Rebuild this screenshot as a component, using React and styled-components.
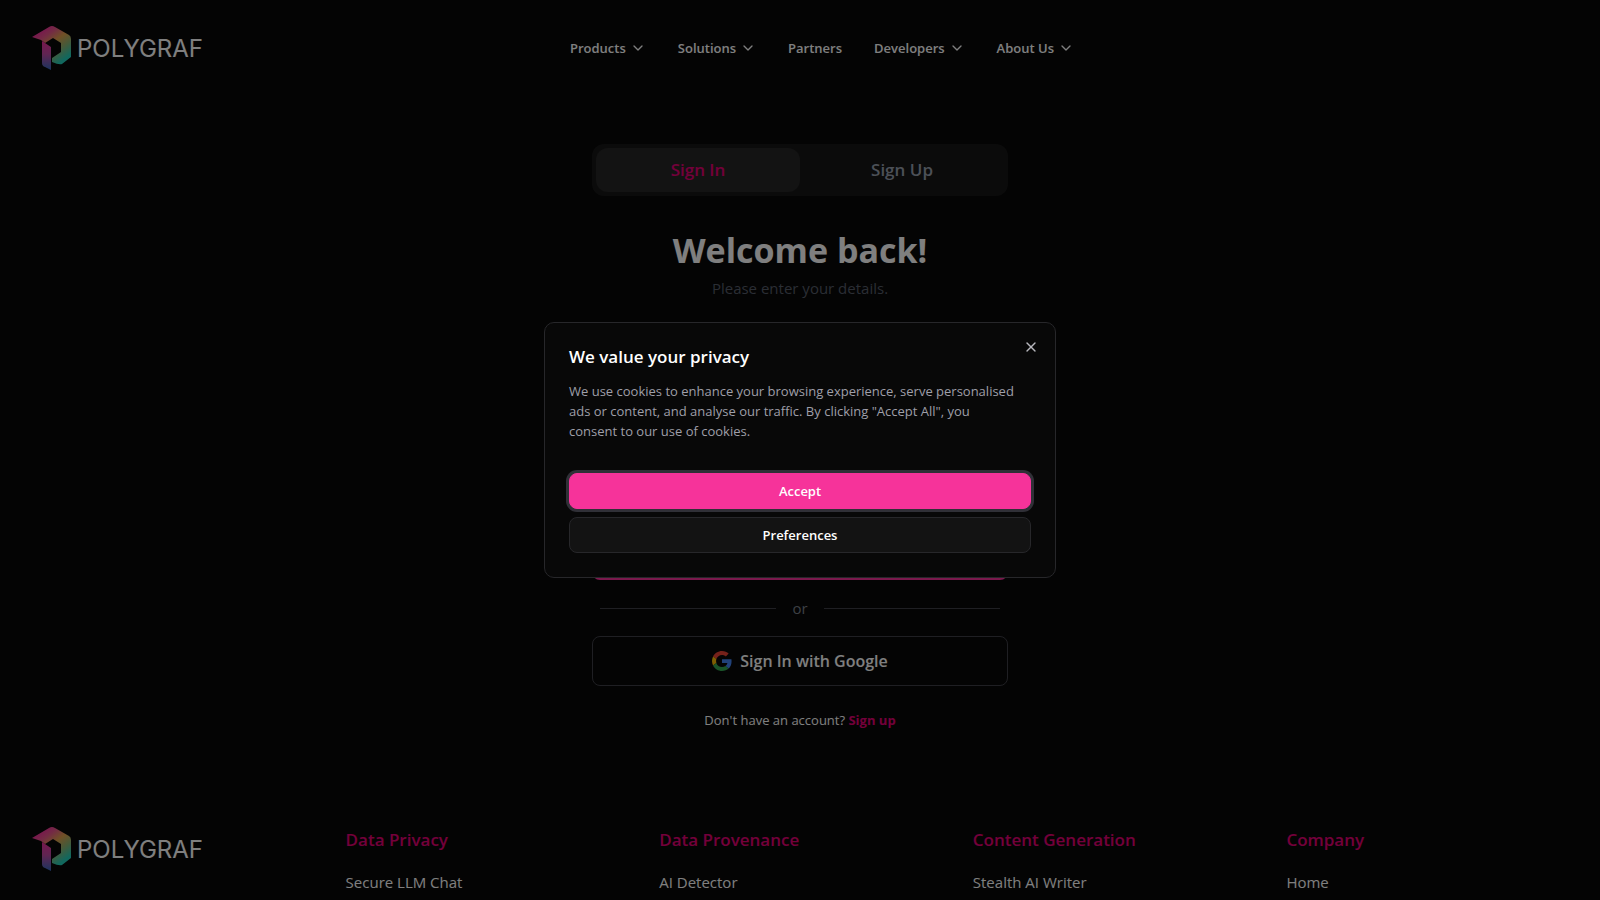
import React from "react";
import styled, { createGlobalStyle, css } from "styled-components";
import { ChevronDown, X } from "lucide-react";

const GlobalStyle = createGlobalStyle`
  *, *::before, *::after { box-sizing: border-box; }
  html, body { margin: 0; background: #080808; }
  body {
    color: #ffffff;
    font-family: "Segoe UI", "Open Sans", "Noto Sans", sans-serif;
    font-size: 15px;
    line-height: 24px;
    overflow: hidden;
  }
  h1, h2, p, ul { margin: 0; padding: 0; }
  ul { list-style: none; }
  a { color: inherit; text-decoration: none; }
  button, input { font: inherit; color: inherit; }
`;

const Page = styled.div`
  display: flex;
  flex-direction: column;
`;

const Header = styled.header`
  display: grid;
  grid-template-columns: 1fr auto 1fr;
  align-items: center;
  height: 96px;
  padding: 0 32px;
`;

const Nav = styled.nav`
  display: flex;
  gap: 32px;
  padding-left: 44px;
`;

const navItem = css`
  display: flex;
  align-items: center;
  gap: 4px;
  padding: 0;
  border: 0;
  background: none;
  font-size: 13px;
  font-weight: 600;
  line-height: 20px;
`;

const NavButton = styled.button`
  ${navItem}
`;

const NavLink = styled.a`
  ${navItem}
`;

const LogoLink = styled.a`
  display: block;
  width: 176px;
  height: 46px;
  svg { display: block; }
`;

const Main = styled.main`
  display: flex;
  flex-direction: column;
  width: 100%;
  max-width: 416px;
  margin: 48px auto 0;
`;

const Tabs = styled.div`
  display: grid;
  grid-template-columns: 1fr 1fr;
  padding: 4px;
  border-radius: 12px;
  background: #171717;
`;

const Tab = styled.button`
  height: 44px;
  border: 0;
  border-radius: 12px;
  background: ${(p) => (p.$active ? "#262626" : "transparent")};
  color: ${(p) => (p.$active ? "#e60076" : "#99a1af")};
  font-size: 17px;
  font-weight: 600;
`;

const Heading = styled.h1`
  margin-top: 32px;
  font-size: 34px;
  font-weight: 700;
  line-height: 44px;
  text-align: center;
`;

const Subheading = styled.p`
  margin-top: 4px;
  color: #565c68;
  text-align: center;
`;

const Form = styled.form`
  display: flex;
  flex-direction: column;
  gap: 32px;
  margin-top: 32px;
`;

const Field = styled.input`
  height: 68px;
  padding: 0 16px;
  border: 1px solid #3f3f46;
  border-radius: 8px;
  background: transparent;
`;

const Submit = styled.button`
  height: 48px;
  border: 0;
  border-radius: 8px;
  background: #f6339a;
`;

const Divider = styled.div`
  display: flex;
  align-items: center;
  gap: 16px;
  margin: 16px 8px;
  color: #7a808a;
  &::before, &::after {
    content: "";
    flex: 1;
    height: 1px;
    background: #3f3f46;
  }
`;

const GoogleButton = styled.button`
  display: flex;
  align-items: center;
  justify-content: center;
  gap: 8px;
  height: 50px;
  border: 1px solid #3f3f46;
  border-radius: 8px;
  background: transparent;
  font-size: 16px;
  font-weight: 600;
`;

const AccountLine = styled.p`
  margin-top: 24px;
  font-size: 13px;
  line-height: 20px;
  text-align: center;
  a { color: #e60076; font-weight: 700; }
`;

const Footer = styled.footer`
  display: grid;
  grid-template-columns: repeat(5, 1fr);
  gap: 32px;
  margin-top: 96px;
  padding: 0 32px 4px;
`;

const FooterTitle = styled.h2`
  color: #e60076;
  font-size: 17px;
  font-weight: 600;
  line-height: 28px;
`;

const FooterList = styled.ul`
  margin-top: 16px;
`;

const Overlay = styled.div`
  position: fixed;
  inset: 0;
  display: flex;
  align-items: center;
  justify-content: center;
  background: rgba(0, 0, 0, 0.5);
`;

const Dialog = styled.section`
  position: relative;
  display: flex;
  flex-direction: column;
  width: 100%;
  max-width: 512px;
  padding: 24px;
  border: 1px solid #27272a;
  border-radius: 10px;
  background: #080808;
`;

const DialogTitle = styled.h2`
  font-size: 17px;
  font-weight: 600;
  line-height: 20px;
`;

const DialogText = styled.p`
  margin-top: 14px;
  padding-right: 12px;
  color: #9f9fa9;
  font-size: 13px;
  line-height: 20px;
`;

const DialogActions = styled.div`
  display: flex;
  flex-direction: column;
  gap: 8px;
  margin-top: 32px;
`;

const DialogButton = styled.button`
  height: 36px;
  border: 1px solid ${(p) => (p.$primary ? "#f6339a" : "#27272a")};
  border-radius: 8px;
  background: ${(p) => (p.$primary ? "#f6339a" : "#131313")};
  box-shadow: ${(p) => (p.$primary ? "0 0 0 3px #303037" : "none")};
  font-size: 13px;
  font-weight: 600;
  outline: none;
`;

const CloseButton = styled.button`
  position: absolute;
  top: 16px;
  right: 16px;
  padding: 0;
  border: 0;
  background: none;
  color: #b8b8be;
  svg { display: block; }
`;

function Logo({ id }) {
  return (
    <LogoLink href="#" aria-label="Polygraf">
      <svg width="176" height="46" viewBox="0 0 176 46">
        <defs>
          <linearGradient id={`${id}-ring`} x1="8" y1="6" x2="30" y2="36" gradientUnits="userSpaceOnUse">
            <stop offset="0" stopColor="#f0309c" />
            <stop offset="0.2" stopColor="#e8568a" />
            <stop offset="0.45" stopColor="#e0a04c" />
            <stop offset="0.7" stopColor="#8fb472" />
            <stop offset="1" stopColor="#24d0bc" />
          </linearGradient>
          <linearGradient id={`${id}-stem`} x1="0" y1="16" x2="0" y2="45" gradientUnits="userSpaceOnUse">
            <stop offset="0" stopColor="#f0309c" />
            <stop offset="0.45" stopColor="#c04aa4" />
            <stop offset="1" stopColor="#3668bc" />
          </linearGradient>
        </defs>
        <path
          d="M0 12 L17 2 Q20 0 23 2 L37 10 Q39 11 39 14 V32 L30 39 Q27 40 20 37 V33 L29 27 V18 L21 13 L13 18 L9 15 Z"
          fill={`url(#${id}-ring)`}
        />
        <path d="M10 16 L19 22 V45 L13 42 Q10 41 10 38 Z" fill={`url(#${id}-stem)`} />
        <text x="45" y="32" fill="#ffffff" fontFamily="Inter, sans-serif" fontSize="24" fontWeight="400">
          POLYGRAF
        </text>
      </svg>
    </LogoLink>
  );
}

function GoogleIcon() {
  return (
    <svg width="20" height="20" viewBox="0 0 48 48" aria-hidden="true">
      <path fill="#EA4335" d="M24 9.5c3.54 0 6.71 1.22 9.21 3.6l6.85-6.85C35.9 2.38 30.47 0 24 0 14.62 0 6.51 5.38 2.56 13.22l7.98 6.19C12.43 13.72 17.74 9.5 24 9.5z" />
      <path fill="#4285F4" d="M46.98 24.55c0-1.57-.15-3.09-.38-4.55H24v9.02h12.94c-.58 2.96-2.26 5.48-4.78 7.18l7.73 6c4.51-4.18 7.09-10.36 7.09-17.65z" />
      <path fill="#FBBC05" d="M10.53 28.59c-.48-1.45-.76-2.99-.76-4.59s.27-3.14.76-4.59l-7.98-6.19C.92 16.46 0 20.12 0 24c0 3.88.92 7.54 2.56 10.78l7.97-6.19z" />
      <path fill="#34A853" d="M24 48c6.48 0 11.93-2.13 15.89-5.81l-7.73-6c-2.15 1.45-4.92 2.3-8.16 2.3-6.26 0-11.57-4.22-13.47-9.91l-7.98 6.19C6.51 42.62 14.62 48 24 48z" />
    </svg>
  );
}

const menu = [
  { label: "Products", opens: true },
  { label: "Solutions", opens: true },
  { label: "Partners", opens: false },
  { label: "Developers", opens: true },
  { label: "About Us", opens: true },
];

const footerColumns = [
  { title: "Data Privacy", links: ["Secure LLM Chat"] },
  { title: "Data Provenance", links: ["AI Detector"] },
  { title: "Content Generation", links: ["Stealth AI Writer"] },
  { title: "Company", links: ["Home"] },
];

export default function App() {
  return (
    <>
      <GlobalStyle />
      <Page>
        <Header>
          <Logo id="header-logo" />
          <Nav aria-label="Main">
            {menu.map((item) =>
              item.opens ? (
                <NavButton key={item.label} type="button">
                  {item.label}
                  <ChevronDown size={16} />
                </NavButton>
              ) : (
                <NavLink key={item.label} href="#">
                  {item.label}
                </NavLink>
              )
            )}
          </Nav>
        </Header>
        <Main>
          <Tabs role="tablist">
            <Tab type="button" role="tab" aria-selected="true" $active>Sign In</Tab>
            <Tab type="button" role="tab" aria-selected="false">Sign Up</Tab>
          </Tabs>
          <Heading>Welcome back!</Heading>
          <Subheading>Please enter your details.</Subheading>
          <Form>
            <Field type="email" aria-label="Email" />
            <Field type="password" aria-label="Password" />
            <Submit type="submit" aria-label="Submit" />
          </Form>
          <Divider>or</Divider>
          <GoogleButton type="button">
            <GoogleIcon />
            Sign In with Google
          </GoogleButton>
          <AccountLine>
            Don't have an account? <a href="#">Sign up</a>
          </AccountLine>
        </Main>
        <Footer>
          <Logo id="footer-logo" />
          {footerColumns.map((column) => (
            <div key={column.title}>
              <FooterTitle>{column.title}</FooterTitle>
              <FooterList>
                {column.links.map((link) => (
                  <li key={link}><a href="#">{link}</a></li>
                ))}
              </FooterList>
            </div>
          ))}
        </Footer>
      </Page>
      <Overlay>
        <Dialog role="dialog" aria-modal="true" aria-labelledby="privacy-title">
          <DialogTitle id="privacy-title">We value your privacy</DialogTitle>
          <DialogText>
            We use cookies to enhance your browsing experience, serve personalised ads or content,
            and analyse our traffic. By clicking "Accept All", you consent to our use of cookies.
          </DialogText>
          <DialogActions>
            <DialogButton type="button" $primary>Accept</DialogButton>
            <DialogButton type="button">Preferences</DialogButton>
          </DialogActions>
          <CloseButton type="button" aria-label="Close">
            <X size={16} />
          </CloseButton>
        </Dialog>
      </Overlay>
    </>
  );
}
